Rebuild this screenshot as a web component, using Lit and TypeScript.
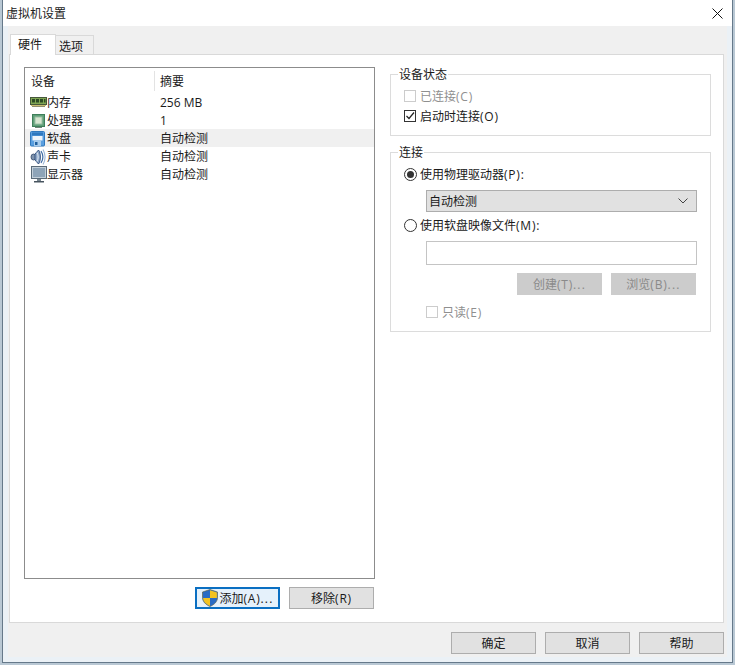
import { LitElement, html, css, svg } from "lit";
import { customElement } from "lit/decorators.js";

const icons: Record<string, unknown> = {
  mem: svg`<rect x="0.500" y="3.500" width="16" height="7" fill="#7fa653" stroke="#46583a"/><rect x="2" y="5" width="3" height="3.500" fill="#2c4a24"/><rect x="6" y="5" width="3" height="3.500" fill="#2c4a24"/><rect x="10" y="5" width="3" height="3.500" fill="#2c4a24"/><rect x="14" y="5" width="1.500" height="3.500" fill="#2c4a24"/><path d="M1 11.500h15" stroke="#c9bd72"/><path d="M2 12.500h13" stroke="#8f8f70"/>`,
  cpu: svg`<rect x="2.500" y="2.500" width="12" height="12" fill="#5f9f78" stroke="#3f7f5a"/><rect x="5" y="5" width="7" height="7" fill="#d5e5cf" stroke="#9cc0a4"/><path d="M5 15.500h7" stroke="#6f8578"/>`,
  floppy: svg`<rect x="0.500" y="1.500" width="14" height="14.500" rx="1" fill="#5a9fe0" stroke="#2f78bd"/><rect x="2" y="2.500" width="11" height="3" fill="#2f78bd"/><rect x="2.500" y="6" width="10" height="4.500" fill="#f0f5fa"/><rect x="4" y="11" width="7" height="5" fill="#a9cdec"/><rect x="5" y="12" width="2.500" height="3" fill="#1f5e9c"/>`,
  sound: svg`<ellipse cx="3.500" cy="9" rx="2.500" ry="3" fill="#7f93ad" stroke="#34496a" stroke-width=".8"/><path d="M5 6l3.500-4c2.500 3 2.500 11 0 14L5 12z" fill="#8ea7c7" stroke="#2b4a78" stroke-width=".9"/><path d="M7 4.500c1.500 3 1.500 6 0 9" fill="none" stroke="#e3ebf3"/><path d="M11 3c2.200 3.500 2.200 8.500 0 12" fill="none" stroke="#3f6da6" stroke-width="1.200"/><path d="M13 1.500c2.500 4.500 2.500 10.500 0 15" fill="none" stroke="#9db7d6" stroke-width="1.100"/>`,
  mon: svg`<rect x="1.500" y="0.500" width="15" height="12" fill="#c3cfd9" stroke="#5a6a78"/><rect x="3" y="2" width="12" height="9" fill="#8ea4b8"/><path d="M7 13h4v2H7z" fill="#77858f"/><path d="M4 15h10v1.500H4z" fill="#47545f"/>`,
};

const rows = [
  ["mem", "内存", "256 MB"],
  ["cpu", "处理器", "1"],
  ["floppy", "软盘", "自动检测"],
  ["sound", "声卡", "自动检测"],
  ["mon", "显示器", "自动检测"],
];

const lab = (cjk: string, key = "", dots = "") =>
  html`<span class="lab">${cjk}<span class="a">${key}</span><span class="d">${dots}</span></span>`;

@customElement("app-root")
export class AppRoot extends LitElement {
  static styles = css`
    :host {
      display: block;
      width: 735px;
      height: 665px;
      overflow: hidden;
      font: 12px/16px "Open Sans", "Noto Sans CJK SC", sans-serif;
      color: #1a1a1a;
      background: #b9c8d4;
    }
    .window {
      box-sizing: border-box;
      margin-left: 2px;
      width: 731px;
      height: 663px;
      display: flex;
      flex-direction: column;
      background: #f0f0f0;
      border: solid #66798a;
      border-width: 0 1px 1px 1px;
      box-shadow: inset 0 0 0 5px #ebf1f6;
    }
    .title {
      flex: none;
      box-sizing: border-box;
      height: 26px;
      background: #fff;
      display: flex;
      align-items: center;
      justify-content: space-between;
      padding: 1px 9px 0 3px;
      color: #222;
    }
    .close { display: block; margin-top: -1px; }
    .tabs {
      flex: none;
      height: 28px;
      box-sizing: border-box;
      padding: 8px 0 0 7px;
      display: flex;
      align-items: flex-end;
    }
    .tab {
      box-sizing: border-box;
      border: 1px solid #d9d9d9;
      border-bottom: none;
    }
    .tab.on {
      width: 46px;
      height: 21px;
      background: #fff;
      padding: 2px 0 0 7px;
      margin-bottom: -1px;
      position: relative;
      z-index: 1;
    }
    .tab.off {
      width: 38px;
      height: 19px;
      padding: 3px 0 0 3px;
      background: #f0f0f0;
      border-left: none;
    }
    .panel {
      flex: none;
      box-sizing: border-box;
      margin-left: 6px;
      width: 715px;
      height: 569px;
      background: #fff;
      border: 1px solid #d9d9d9;
      padding: 12px 11px 0 14px;
      display: grid;
      grid-template-columns: 351px 321px;
      column-gap: 15px;
    }
    .left { display: flex; flex-direction: column; }
    .list {
      box-sizing: border-box;
      height: 512px;
      border: 1px solid #8c8c8c;
    }
    .head {
      box-sizing: border-box;
      display: grid;
      grid-template-columns: 129px 1fr;
      height: 25px;
      align-items: center;
      padding-top: 1px;
    }
    .head span { padding-left: 6px; height: 20px; line-height: 22px; }
    .head span + span { border-left: 1px solid #e3e3e3; padding-left: 5px; }
    .row {
      display: grid;
      grid-template-columns: 135px 1fr;
      height: 18px;
      line-height: 20px;
    }
    .row.sel { background: #f0f0f0; }
    .name { display: flex; align-items: center; padding-left: 5px; }
    .name svg { flex: none; }
    .actions {
      display: flex;
      justify-content: flex-end;
      gap: 9px;
      padding: 8px 1px 0 0;
    }
    .btn {
      box-sizing: border-box;
      width: 85px;
      height: 22px;
      background: #e1e1e1;
      border: 1px solid #adadad;
      display: flex;
      align-items: center;
      justify-content: center;
    }
    .btn > span { padding-top: 2px; }
    .btn.def { border: 2px solid #0a6fc2; background: #e5f1fb; }
    .btn.dis { background: #ccc; border-color: #ccc; color: #8a8a8a; }
    .a { letter-spacing: 0.8px; }
    .d { letter-spacing: 1.2px; }
    .right { display: flex; flex-direction: column; gap: 9px; }
    fieldset {
      margin: 0;
      min-width: 0;
      border: 1px solid #dcdcdc;
      box-sizing: border-box;
    }
    legend { padding: 0 1px; margin-left: -6px; line-height: 16px; height: 14px; }
    .g1 { height: 69px; padding: 5px 0 0 13px; }
    .g2 { height: 187px; padding: 5px 13px 0 13px; }
    .check { display: flex; align-items: center; height: 20px; gap: 4px; }
    .check .lab, .rline .lab { padding-top: 1px; }
    .box {
      flex: none;
      box-sizing: border-box;
      width: 12px;
      height: 12px;
      background: #fff;
      border: 1px solid #333;
      display: block;
    }
    .dis-t { color: #8f8f8f; }
    .dis-t .box { border-color: #ccc; }
    .radio {
      flex: none;
      box-sizing: border-box;
      width: 13px;
      height: 13px;
      border: 1px solid #333;
      border-radius: 50%;
      background: #fff;
      display: flex;
      align-items: center;
      justify-content: center;
    }
    .radio i { width: 7px; height: 7px; border-radius: 50%; background: #333; display: block; }
    .rline { display: flex; align-items: center; height: 20px; gap: 3px; }
    .sub { padding-left: 22px; }
    .select {
      box-sizing: border-box;
      height: 22px;
      margin: 6px 0 3px;
      background: #e1e1e1;
      border: 1px solid #adadad;
      padding: 0 8px 0 2px;
      display: flex;
      align-items: center;
      justify-content: space-between;
    }
    .select span { padding-top: 2px; }
    .input {
      box-sizing: border-box;
      height: 24px;
      margin-top: 6px;
      border: 1px solid #c4c4c4;
      background: #fff;
    }
    .fbtns { display: flex; justify-content: flex-end; gap: 9px; margin: 8px 1px 7px 0; }
    .bottom {
      flex: none;
      display: flex;
      justify-content: flex-end;
      gap: 9px;
      padding: 9px 8px 0 0;
    }
  `;

  private shield() {
    return svg`<svg width="18" height="18" viewBox="0 0 18 18"><path d="M9 .5l7.500 2.500v5.500c0 4-3 7-7.500 9-4.500-2-7.500-5-7.500-9V3z" fill="#2a6cc4" stroke="#5c5a3a" stroke-width=".6"/><path d="M9 1.200l6.900 2.300V9H9z" fill="#f3c321"/><path d="M2.100 9H9v8C5 15.200 2.100 12.500 2.100 9z" fill="#f3c321"/></svg>`;
  }

  render() {
    return html`
      <div class="window">
        <div class="title">
          <span>虚拟机设置</span>
          <svg class="close" width="11" height="11" viewBox="0 0 11 11"><path d="M.5.5l10 10M10.500.5l-10 10" stroke="#111" stroke-width="1"/></svg>
        </div>
        <div class="tabs">
          <div class="tab on">硬件</div>
          <div class="tab off">选项</div>
        </div>
        <div class="panel">
          <div class="left">
            <div class="list">
              <div class="head"><span>设备</span><span>摘要</span></div>
              ${rows.map(
                (r) => html`<div class="row ${r[1] === "软盘" ? "sel" : ""}">
                  <div class="name"><svg width="17" height="18" viewBox="0 0 17 18">${icons[r[0]]}</svg><span>${r[1]}</span></div>
                  <div>${r[2]}</div>
                </div>`
              )}
            </div>
            <div class="actions">
              <div class="btn def">${this.shield()}${lab("添加", "(A)", "...")}</div>
              <div class="btn">${lab("移除", "(R)")}</div>
            </div>
          </div>
          <div class="right">
            <fieldset class="g1">
              <legend>设备状态</legend>
              <div class="check dis-t"><span class="box"></span>${lab("已连接", "(C)")}</div>
              <div class="check">
                <svg class="box" viewBox="0 0 10 10"><path d="M1.500 5l2.500 2.500 5-6" fill="none" stroke="#222" stroke-width="1.200"/></svg>${lab("启动时连接", "(O)")}
              </div>
            </fieldset>
            <fieldset class="g2">
              <legend>连接</legend>
              <div class="rline"><span class="radio"><i></i></span>${lab("使用物理驱动器", "(P):")}</div>
              <div class="sub">
                <div class="select">
                  <span>自动检测</span>
                  <svg width="10" height="6" viewBox="0 0 10 6"><path d="M.5.500l4.500 4.500 4.500-4.500" fill="none" stroke="#444"/></svg>
                </div>
              </div>
              <div class="rline"><span class="radio"></span>${lab("使用软盘映像文件", "(M):")}</div>
              <div class="sub">
                <div class="input"></div>
                <div class="fbtns">
                  <div class="btn dis">${lab("创建", "(T)", "...")}</div>
                  <div class="btn dis">${lab("浏览", "(B)", "...")}</div>
                </div>
                <div class="check dis-t"><span class="box"></span>${lab("只读", "(E)")}</div>
              </div>
            </fieldset>
          </div>
        </div>
        <div class="bottom">
          <div class="btn"><span>确定</span></div>
          <div class="btn"><span>取消</span></div>
          <div class="btn"><span>帮助</span></div>
        </div>
      </div>
    `;
  }
}
